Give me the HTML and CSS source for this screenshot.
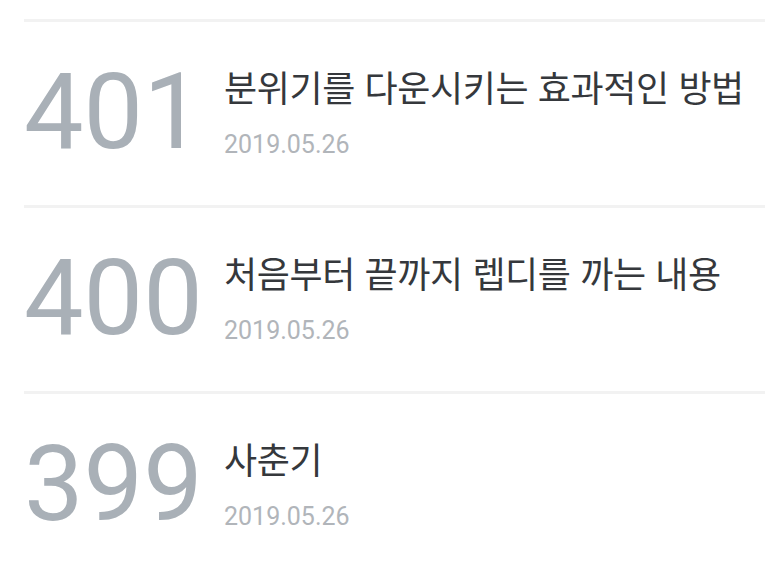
FILE: index.html
```html
<!DOCTYPE html>
<html lang="ko">
<head>
    <meta charset="UTF-8">
    <meta name="viewport" content="width=device-width, initial-scale=1.0">
    <title>게시글 목록</title>
    <link rel="stylesheet" href="styles.css">
</head>
<body>
    <!-- 게시글 목록 -->
    <ul class="post-list">
        <li class="post-item">
            <div class="post-no">401</div>
            <div class="post-info">
                <div class="post-title">분위기를 다운시키는 효과적인 방법</div>
                <div class="post-date">2019.05.26</div>
            </div>
        </li>
        <li class="post-item">
            <div class="post-no">400</div>
            <div class="post-info">
                <div class="post-title">처음부터 끝까지 렙디를 까는 내용</div>
                <div class="post-date">2019.05.26</div>
            </div>
        </li>
        <li class="post-item">
            <div class="post-no">399</div>
            <div class="post-info">
                <div class="post-title">사춘기</div>
                <div class="post-date">2019.05.26</div>
            </div>
        </li>
    </ul>
</body>
</html>
```

FILE: styles.css
```css
* {
    margin: 0;
    padding: 0;
    box-sizing: border-box;
}

body {
    font-family: Roboto, "Noto Sans CJK KR", sans-serif;
    background-color: #fff;
    color: #35383c;
    overflow: hidden;
}

/* 목록 */
.post-list {
    list-style: none;
    margin-top: 19px;
    padding-left: 24px;
}

.post-item {
    display: flex;
    align-items: center;
    height: 186px;
    border-top: 3px solid #f2f2f2;
}

/* 글 번호 */
.post-no {
    width: 200px;
    flex-shrink: 0;
    font-size: 106px;
    line-height: 1;
    color: #a9b0b7;
    margin-top: -4px;
}

/* 제목, 날짜 */
.post-info {
    display: flex;
    flex-direction: column;
    gap: 22px;
    margin-top: -4px;
}

.post-title {
    font-family: "Noto Sans CJK KR", sans-serif;
    font-size: 36px;
    letter-spacing: -0.4px;
    line-height: 44px;
    color: #35383c;
}

.post-date {
    font-size: 25px;
    line-height: 30px;
    color: #b1b5ba;
}
```
